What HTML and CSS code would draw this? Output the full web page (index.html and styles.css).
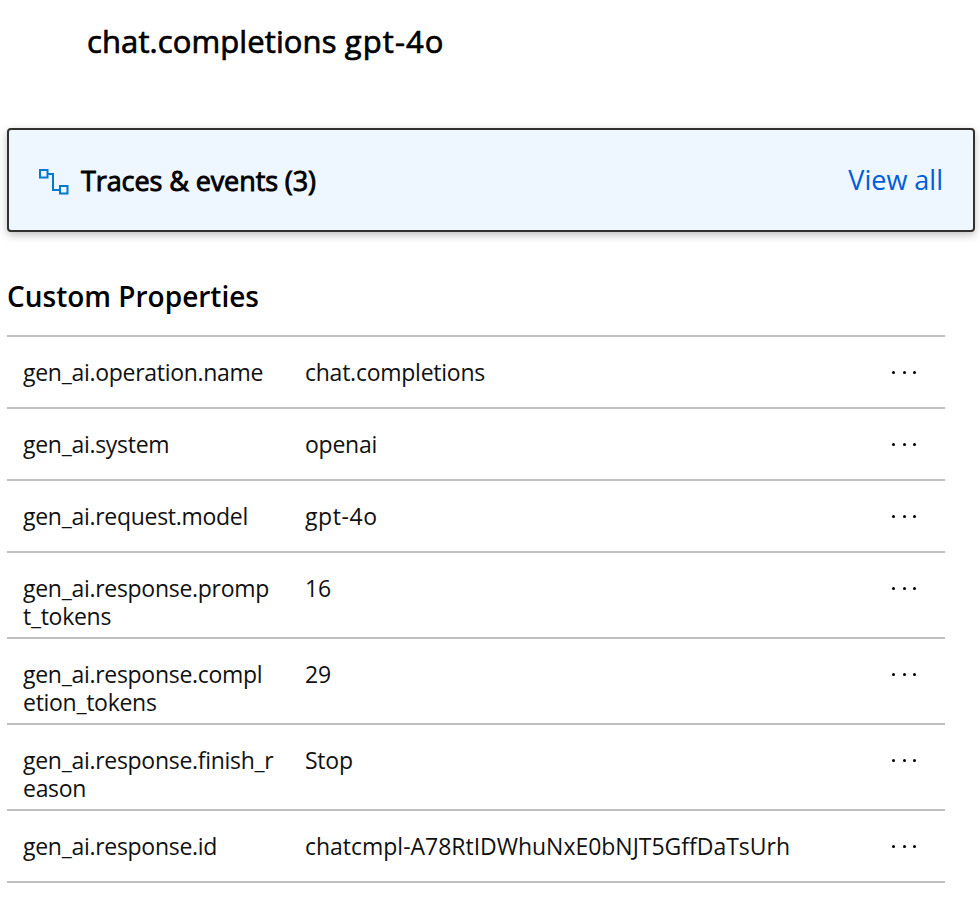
FILE: index.html
```
<!DOCTYPE html>
<html lang="en">
<head>
<meta charset="utf-8">
<title>chat.completions gpt-4o</title>
<link rel="stylesheet" href="styles.css">
</head>
<body>
<h1 class="title">chat.completions <span class="title-model">gpt-4o</span></h1>
<section class="card">
  <svg class="card-icon" width="30" height="26" viewBox="0 0 30 26" fill="none" stroke="#0078d4" stroke-width="2">
    <rect x="1" y="1" width="7.5" height="7.5"/>
    <path d="M9 5H14V21H20"/>
    <rect x="21" y="17" width="7.5" height="7.5"/>
  </svg>
  <h2 class="card-title">Traces &amp; events (3)</h2>
  <a class="card-link">View all</a>
</section>
<h2 class="heading">Custom Properties</h2>
<div class="table">
  <div class="row"><div class="key">gen_ai.operation.name</div><div class="value">chat.completions</div><div class="more"><i></i><i></i><i></i></div></div>
  <div class="row"><div class="key">gen_ai.system</div><div class="value">openai</div><div class="more"><i></i><i></i><i></i></div></div>
  <div class="row"><div class="key">gen_ai.request.model</div><div class="value model">gpt-4o</div><div class="more"><i></i><i></i><i></i></div></div>
  <div class="row tall"><div class="key">gen_ai.response.promp<br>t_tokens</div><div class="value">16</div><div class="more"><i></i><i></i><i></i></div></div>
  <div class="row tall"><div class="key">gen_ai.response.compl<br>etion_tokens</div><div class="value">29</div><div class="more"><i></i><i></i><i></i></div></div>
  <div class="row tall"><div class="key">gen_ai.response.finish_r<br>eason</div><div class="value">Stop</div><div class="more"><i></i><i></i><i></i></div></div>
  <div class="row"><div class="key">gen_ai.response.id</div><div class="value id">chatcmpl-A78RtIDWhuNxE0bNJT5GffDaTsUrh</div><div class="more"><i></i><i></i><i></i></div></div>
</div>
</body>
</html>
```
FILE: styles.css
```
* {
  box-sizing: border-box;
}

body {
  margin: 0;
  padding: 0 5px 0 7px;
  background: #fff;
  color: #000;
  font-family: "Open Sans", "Noto Sans", sans-serif;
  font-size: 23px;
}

.title {
  margin: 0;
  padding: 21px 0 0 80px;
  height: 128px;
  font-size: 31px;
  font-weight: 400;
  line-height: 40px;
  letter-spacing: 0.1px;
  -webkit-text-stroke: 0.7px #000;
}

.title-model {
  letter-spacing: 1.1px;
}

.card {
  display: flex;
  align-items: center;
  height: 104px;
  padding: 0 30px;
  border: 2px solid #323130;
  border-radius: 4px;
  background: #eef6ff;
  box-shadow: 0 3px 8px rgba(0, 0, 0, 0.25);
}

.card-icon {
  margin-top: 4px;
}

.card-title {
  flex: 1;
  margin: 2px 0 0 12px;
  font-size: 27px;
  font-weight: 400;
  line-height: 36px;
  letter-spacing: -0.1px;
  -webkit-text-stroke: 0.9px #000;
}

.card-link {
  color: #015cda;
  font-size: 27px;
  line-height: 36px;
}

.heading {
  margin: 0;
  padding-top: 46px;
  height: 103px;
  font-size: 28px;
  font-weight: 600;
  line-height: 36px;
}

.table {
  width: 938px;
  border-top: 2px solid #c0c0c0;
}

.row {
  display: grid;
  grid-template-columns: 282px 1fr 53px;
  height: 72px;
  padding: 21px 0 0 16px;
  border-bottom: 2px solid #c0c0c0;
  line-height: 28px;
  color: #111;
}

.tall {
  height: 86px;
}

.key {
  letter-spacing: -0.29px;
}

.value {
  letter-spacing: -0.25px;
}

.value.model {
  letter-spacing: 0.6px;
}

.value.id {
  letter-spacing: -0.02px;
}

.more {
  display: flex;
  gap: 7.5px;
  padding-top: 13px;
}

.more i {
  width: 3px;
  height: 3px;
  border-radius: 50%;
  background: #000;
}
```
